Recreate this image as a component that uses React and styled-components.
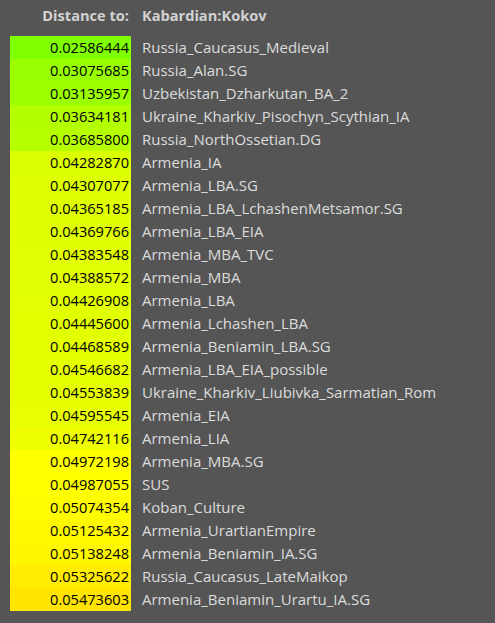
import React from "react";
import styled, { createGlobalStyle } from "styled-components";

const Global = createGlobalStyle`
  html, body { margin: 0; padding: 0; background: #555555; }
  body { font-family: "Open Sans", "Noto Sans", sans-serif; }
`;

const Page = styled.div`
  width: 495px;
  min-height: 623px;
  box-sizing: border-box;
  padding: 4px 10px 0 10px;
  background: #555555;
`;

const Grid = styled.div`
  display: grid;
  grid-template-columns: 121px auto;
  column-gap: 11px;
  align-items: center;
`;

const HeadLabel = styled.div`
  font-size: 14.6px;
  font-weight: 700;
  line-height: 23px;
  color: #d2d2d2;
  text-align: right;
  padding-right: 2px;
  margin-bottom: 9px;
`;

const HeadValue = styled.div`
  font-size: 14.6px;
  font-weight: 700;
  line-height: 23px;
  color: #d2d2d2;
  margin-bottom: 9px;
`;

const Num = styled.div`
  height: 23px;
  line-height: 23px;
  font-size: 14.6px;
  color: #000;
  text-align: right;
  padding-right: 2px;
  background: ${(p) => p.$bg};
`;

const Name = styled.div`
  height: 23px;
  line-height: 23px;
  font-size: 15px;
  color: #dcdcdc;
  white-space: nowrap;
`;

const rows = [
  ["0.02586444", "Russia_Caucasus_Medieval", "#80ff00"],
  ["0.03075685", "Russia_Alan.SG", "#99ff00"],
  ["0.03135957", "Uzbekistan_Dzharkutan_BA_2", "#9bff00"],
  ["0.03634181", "Ukraine_Kharkiv_Pisochyn_Scythian_IA", "#b3ff00"],
  ["0.03685800", "Russia_NorthOssetian.DG", "#b5ff00"],
  ["0.04282870", "Armenia_IA", "#dcff00"],
  ["0.04307077", "Armenia_LBA.SG", "#ddff00"],
  ["0.04365185", "Armenia_LBA_LchashenMetsamor.SG", "#dfff00"],
  ["0.04369766", "Armenia_LBA_EIA", "#dfff00"],
  ["0.04383548", "Armenia_MBA_TVC", "#e0ff00"],
  ["0.04388572", "Armenia_MBA", "#e0ff00"],
  ["0.04426908", "Armenia_LBA", "#e1ff00"],
  ["0.04445600", "Armenia_Lchashen_LBA", "#e2ff00"],
  ["0.04468589", "Armenia_Beniamin_LBA.SG", "#e3ff00"],
  ["0.04546682", "Armenia_LBA_EIA_possible", "#e5ff00"],
  ["0.04553839", "Ukraine_Kharkiv_Liubivka_Sarmatian_Rom", "#e6ff00"],
  ["0.04595545", "Armenia_EIA", "#e7ff00"],
  ["0.04742116", "Armenia_LIA", "#eeff00"],
  ["0.04972198", "Armenia_MBA.SG", "#ffff00"],
  ["0.04987055", "SUS", "#ffff00"],
  ["0.05074354", "Koban_Culture", "#fffb00"],
  ["0.05125432", "Armenia_UrartianEmpire", "#fff800"],
  ["0.05138248", "Armenia_Beniamin_IA.SG", "#fff700"],
  ["0.05325622", "Russia_Caucasus_LateMaikop", "#ffec00"],
  ["0.05473603", "Armenia_Beniamin_Urartu_IA.SG", "#ffe400"],
];

export default function App() {
  return (
    <>
      <Global />
      <Page>
        <Grid>
          <HeadLabel>Distance to:</HeadLabel>
          <HeadValue>Kabardian:Kokov</HeadValue>
          {rows.map(([v, n, c]) => (
            <React.Fragment key={n}>
              <Num $bg={c}>{v}</Num>
              <Name>{n}</Name>
            </React.Fragment>
          ))}
        </Grid>
      </Page>
    </>
  );
}
